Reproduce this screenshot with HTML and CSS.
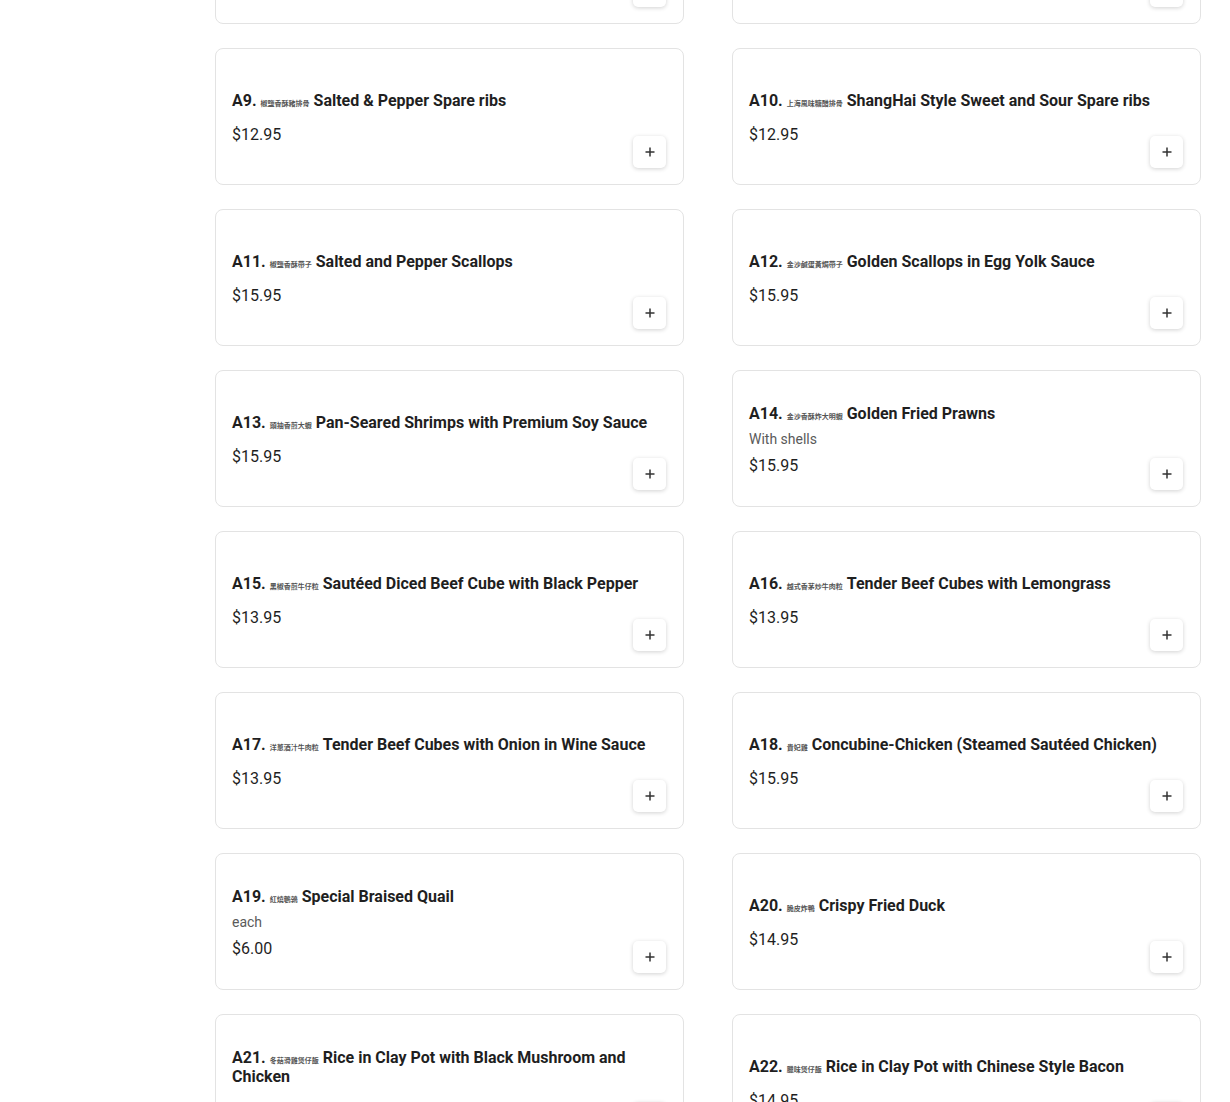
FILE: index.html
```html
<!DOCTYPE html>
<html lang="en">
<head>
<meta charset="utf-8">
<title>Menu</title>
<link rel="stylesheet" href="styles.css">
</head>
<body>
<div class="page">
  <aside class="sidebar"></aside>
  <main class="content">
    <div class="menu-grid">
      <div class="card"><div class="info"></div><button class="add" aria-label="Add"><svg viewBox="0 0 12 12" width="12" height="12"><path d="M6 1.5v9M1.5 6h9" stroke="#333" stroke-width="1.5" fill="none"/></svg></button></div>
      <div class="card"><div class="info"></div><button class="add" aria-label="Add"><svg viewBox="0 0 12 12" width="12" height="12"><path d="M6 1.5v9M1.5 6h9" stroke="#333" stroke-width="1.5" fill="none"/></svg></button></div>

      <div class="card"><div class="info"><div class="title">A9. <span class="zh">椒鹽香酥豬排骨</span> Salted &amp; Pepper Spare ribs</div><div class="price">$12.95</div></div><button class="add" aria-label="Add"><svg viewBox="0 0 12 12" width="12" height="12"><path d="M6 1.5v9M1.5 6h9" stroke="#333" stroke-width="1.5" fill="none"/></svg></button></div>
      <div class="card"><div class="info"><div class="title">A10. <span class="zh">上海風味糖醋排骨</span> ShangHai Style Sweet and Sour Spare ribs</div><div class="price">$12.95</div></div><button class="add" aria-label="Add"><svg viewBox="0 0 12 12" width="12" height="12"><path d="M6 1.5v9M1.5 6h9" stroke="#333" stroke-width="1.5" fill="none"/></svg></button></div>

      <div class="card"><div class="info"><div class="title">A11. <span class="zh">椒鹽香酥帶子</span> Salted and Pepper Scallops</div><div class="price">$15.95</div></div><button class="add" aria-label="Add"><svg viewBox="0 0 12 12" width="12" height="12"><path d="M6 1.5v9M1.5 6h9" stroke="#333" stroke-width="1.5" fill="none"/></svg></button></div>
      <div class="card"><div class="info"><div class="title">A12. <span class="zh">金沙鹹蛋黃焗帶子</span> Golden Scallops in Egg Yolk Sauce</div><div class="price">$15.95</div></div><button class="add" aria-label="Add"><svg viewBox="0 0 12 12" width="12" height="12"><path d="M6 1.5v9M1.5 6h9" stroke="#333" stroke-width="1.5" fill="none"/></svg></button></div>

      <div class="card"><div class="info"><div class="title">A13. <span class="zh">頭抽香煎大蝦</span> Pan-Seared Shrimps with Premium Soy Sauce</div><div class="price">$15.95</div></div><button class="add" aria-label="Add"><svg viewBox="0 0 12 12" width="12" height="12"><path d="M6 1.5v9M1.5 6h9" stroke="#333" stroke-width="1.5" fill="none"/></svg></button></div>
      <div class="card"><div class="info"><div class="title">A14. <span class="zh">金沙香酥炸大明蝦</span> Golden Fried Prawns</div><div class="desc">With shells</div><div class="price">$15.95</div></div><button class="add" aria-label="Add"><svg viewBox="0 0 12 12" width="12" height="12"><path d="M6 1.5v9M1.5 6h9" stroke="#333" stroke-width="1.5" fill="none"/></svg></button></div>

      <div class="card"><div class="info"><div class="title">A15. <span class="zh">黑椒香煎牛仔粒</span> Sautéed Diced Beef Cube with Black Pepper</div><div class="price">$13.95</div></div><button class="add" aria-label="Add"><svg viewBox="0 0 12 12" width="12" height="12"><path d="M6 1.5v9M1.5 6h9" stroke="#333" stroke-width="1.5" fill="none"/></svg></button></div>
      <div class="card"><div class="info"><div class="title">A16. <span class="zh">越式香茅炒牛肉粒</span> Tender Beef Cubes with Lemongrass</div><div class="price">$13.95</div></div><button class="add" aria-label="Add"><svg viewBox="0 0 12 12" width="12" height="12"><path d="M6 1.5v9M1.5 6h9" stroke="#333" stroke-width="1.5" fill="none"/></svg></button></div>

      <div class="card"><div class="info"><div class="title">A17. <span class="zh">洋蔥酒汁牛肉粒</span> Tender Beef Cubes with Onion in Wine Sauce</div><div class="price">$13.95</div></div><button class="add" aria-label="Add"><svg viewBox="0 0 12 12" width="12" height="12"><path d="M6 1.5v9M1.5 6h9" stroke="#333" stroke-width="1.5" fill="none"/></svg></button></div>
      <div class="card"><div class="info"><div class="title">A18. <span class="zh">貴妃雞</span> Concubine-Chicken (Steamed Sautéed Chicken)</div><div class="price">$15.95</div></div><button class="add" aria-label="Add"><svg viewBox="0 0 12 12" width="12" height="12"><path d="M6 1.5v9M1.5 6h9" stroke="#333" stroke-width="1.5" fill="none"/></svg></button></div>

      <div class="card"><div class="info"><div class="title">A19. <span class="zh">紅燒鵪鶉</span> Special Braised Quail</div><div class="desc">each</div><div class="price">$6.00</div></div><button class="add" aria-label="Add"><svg viewBox="0 0 12 12" width="12" height="12"><path d="M6 1.5v9M1.5 6h9" stroke="#333" stroke-width="1.5" fill="none"/></svg></button></div>
      <div class="card"><div class="info"><div class="title">A20. <span class="zh">脆皮炸鴨</span> Crispy Fried Duck</div><div class="price">$14.95</div></div><button class="add" aria-label="Add"><svg viewBox="0 0 12 12" width="12" height="12"><path d="M6 1.5v9M1.5 6h9" stroke="#333" stroke-width="1.5" fill="none"/></svg></button></div>

      <div class="card"><div class="info"><div class="title">A21. <span class="zh">冬菇滑雞煲仔飯</span> Rice in Clay Pot with Black Mushroom and Chicken</div><div class="price">$14.95</div></div><button class="add" aria-label="Add"><svg viewBox="0 0 12 12" width="12" height="12"><path d="M6 1.5v9M1.5 6h9" stroke="#333" stroke-width="1.5" fill="none"/></svg></button></div>
      <div class="card"><div class="info"><div class="title">A22. <span class="zh">臘味煲仔飯</span> Rice in Clay Pot with Chinese Style Bacon</div><div class="price">$14.95</div></div><button class="add" aria-label="Add"><svg viewBox="0 0 12 12" width="12" height="12"><path d="M6 1.5v9M1.5 6h9" stroke="#333" stroke-width="1.5" fill="none"/></svg></button></div>
    </div>
  </main>
</div>
</body>
</html>
```

FILE: styles.css
```css
html, body {
  margin: 0;
  padding: 0;
  background: #ffffff;
}
body {
  height: 1102px;
  overflow: hidden;
  font-family: Roboto, "Noto Sans", "Liberation Sans", "Noto Sans CJK TC", sans-serif;
  color: #1f1f1f;
}
.page {
  display: flex;
}
.sidebar {
  width: 215px;
  flex: none;
}
.content {
  flex: 1;
  padding-right: 29px;
}
.menu-grid {
  display: grid;
  grid-template-columns: 1fr 1fr;
  column-gap: 48px;
  row-gap: 24px;
  margin-top: -113px;
}
.card {
  position: relative;
  box-sizing: border-box;
  height: 137px;
  border: 1px solid #e3e3e3;
  border-radius: 8px;
  padding: 18px 16px 16px;
  display: flex;
  align-items: center;
  background: #fff;
}
.info {
  flex: 1;
  display: flex;
  flex-direction: column;
}
.title {
  font-size: 16px;
  font-weight: 700;
  line-height: 19px;
  color: #1f1f1f;
}
.zh {
  font-family: "Noto Sans CJK TC", "Noto Sans CJK SC", sans-serif;
  font-size: 7px;
  line-height: 7px;
  font-weight: 700;
  color: #555;
  letter-spacing: 0;
}
.desc {
  margin-top: 8px;
  font-size: 14px;
  line-height: 17px;
  color: #5a5a5a;
}
.price {
  margin-top: 15px;
  font-size: 16px;
  line-height: 19px;
  color: #1f1f1f;
}
.desc + .price {
  margin-top: 8px;
}
.add {
  position: absolute;
  right: 17px;
  bottom: 16px;
  width: 33px;
  height: 32px;
  padding: 0;
  border: none;
  border-radius: 5px;
  background: #fff;
  box-shadow: 0 1px 4px rgba(0, 0, 0, 0.18);
  display: flex;
  align-items: center;
  justify-content: center;
  cursor: pointer;
}
.add svg {
  display: block;
}
```
